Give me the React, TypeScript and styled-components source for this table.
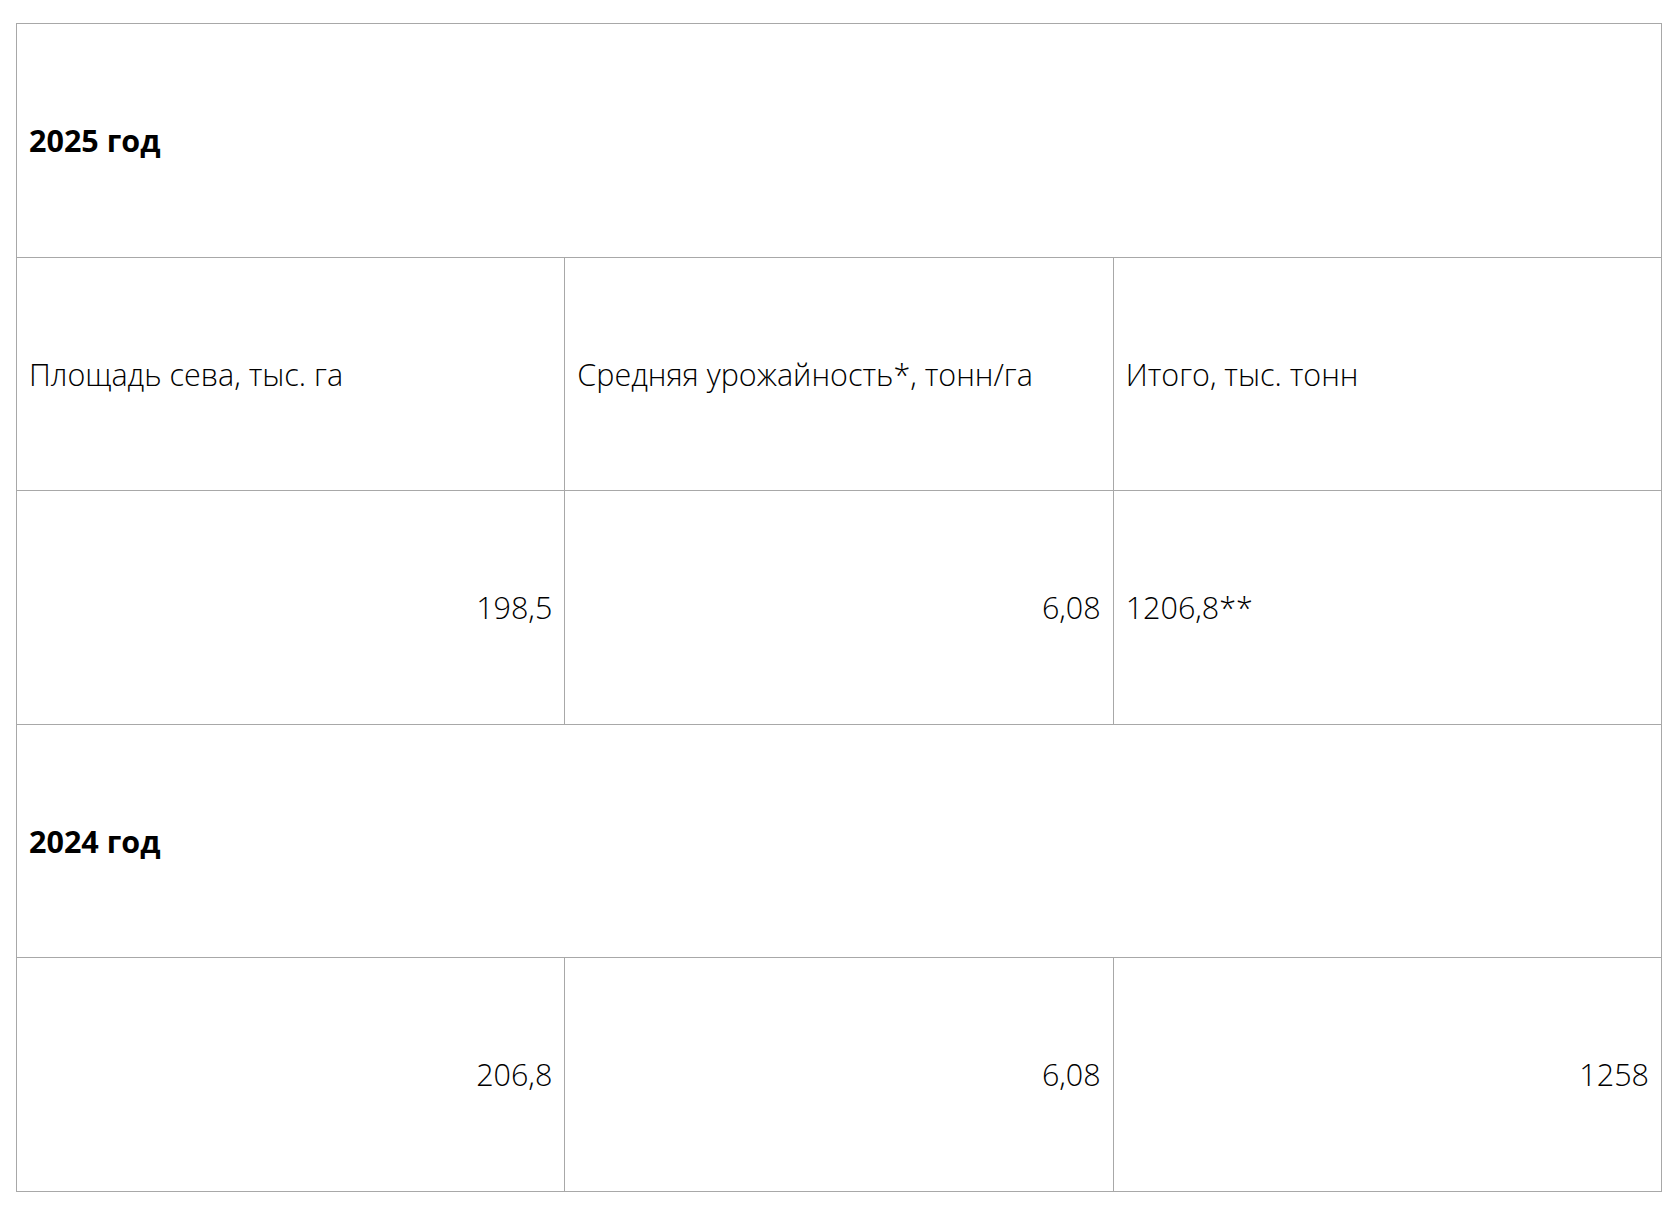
import React from "react";
import styled, { createGlobalStyle } from "styled-components";

const GlobalStyle = createGlobalStyle`
    html, body {
        margin: 0;
        padding: 0;
        background: #fff;
    }
`;

type Row =
    | { kind: "title"; text: string }
    | { kind: "cells"; cells: { text: string; align: "left" | "right" }[] };

const rows: Row[] = [
    { kind: "title", text: "2025 год" },
    {
        kind: "cells",
        cells: [
            { text: "Площадь сева, тыс. га", align: "left" },
            { text: "Средняя урожайность*, тонн/га", align: "left" },
            { text: "Итого, тыс. тонн", align: "left" },
        ],
    },
    {
        kind: "cells",
        cells: [
            { text: "198,5", align: "right" },
            { text: "6,08", align: "right" },
            { text: "1206,8**", align: "left" },
        ],
    },
    { kind: "title", text: "2024 год" },
    {
        kind: "cells",
        cells: [
            { text: "206,8", align: "right" },
            { text: "6,08", align: "right" },
            { text: "1258", align: "right" },
        ],
    },
];

export default function App() {
    return (
        <Page>
            <GlobalStyle />
            <HarvestTable>
                <tbody>
                    {rows.map((row, i) =>
                        row.kind === "title" ? (
                            <TableRow key={i}>
                                <TitleCell colSpan={3}>{row.text}</TitleCell>
                            </TableRow>
                        ) : (
                            <TableRow key={i}>
                                {row.cells.map((cell, j) => (
                                    <Cell key={j} align={cell.align}>
                                        {cell.text}
                                    </Cell>
                                ))}
                            </TableRow>
                        )
                    )}
                </tbody>
            </HarvestTable>
        </Page>
    );
}

const Page = styled.div`
    padding: 23px 18px 24px 16px;
    font-family: "Open Sans", "Liberation Sans", sans-serif;
`;

const HarvestTable = styled.table`
    width: 1646px;
    border-collapse: collapse;
    table-layout: fixed;
    border: 1px solid #a8a8a8;
`;

const TableRow = styled.tr`
    height: 233.6px;
`;

const Cell = styled.td<{ align: "left" | "right" }>`
    border: 1px solid #a8a8a8;
    padding: 0 12px;
    vertical-align: middle;
    text-align: ${props => props.align};
    font-size: 30.5px;
    font-weight: 300;
    color: #000;
    line-height: 1.4;
`;

const TitleCell = styled.td`
    border: 1px solid #a8a8a8;
    padding: 0 12px;
    vertical-align: middle;
    font-size: 30.5px;
    font-weight: 700;
    color: #000;
    line-height: 1.4;
`;
